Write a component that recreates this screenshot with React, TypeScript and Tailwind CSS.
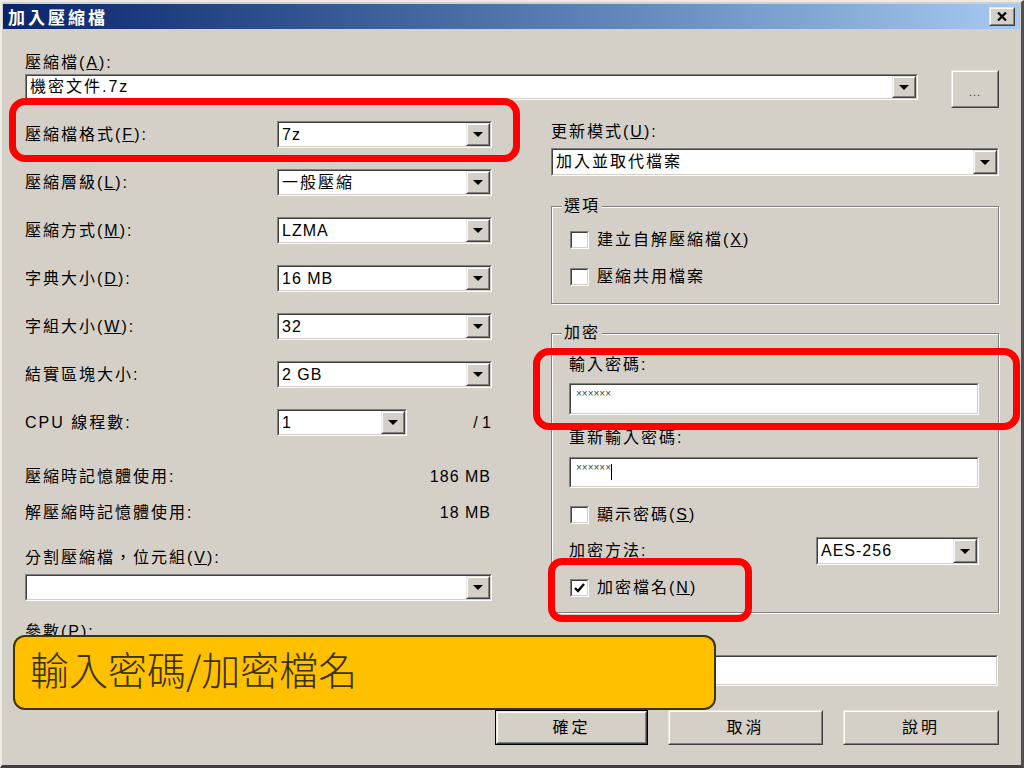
import React from 'react';

const UI = "font-['Liberation_Sans','Noto_Sans_CJK_TC',sans-serif] text-[16px] leading-[20px] tracking-[2px] text-black";

const Arrow = () => (
  <svg width="10" height="5" viewBox="0 0 10 5">
    <path d="M0 0h10L5 5z" fill="#000" />
  </svg>
);

const Raised = ({ className = '', children }: { className?: string; children?: React.ReactNode }) => (
  <div className={`border border-t-[#e8e6e0] border-l-[#e8e6e0] border-b-[#404040] border-r-[#404040] ${className}`}>
    <div className="w-full h-full flex items-center justify-center border border-t-white border-l-white border-b-[#808080] border-r-[#808080] bg-[#D4D0C8]">
      {children}
    </div>
  </div>
);

const Sunken = ({ className = '', inner = '', children }: { className?: string; inner?: string; children?: React.ReactNode }) => (
  <div className={`border border-t-[#808080] border-l-[#808080] border-b-white border-r-white ${className}`}>
    <div className={`w-full h-full flex bg-white border border-t-[#404040] border-l-[#404040] border-b-[#D4D0C8] border-r-[#D4D0C8] ${inner}`}>
      {children}
    </div>
  </div>
);

const Combo = ({ value, className = '', latin = false }: { value: string; className?: string; latin?: boolean }) => (
  <Sunken className={className} inner="items-stretch">
    <span className={`flex-1 flex items-center pl-[3px] whitespace-nowrap ${latin ? 'tracking-[1px]' : ''}`}>{value}</span>
    <Raised className="w-[24px]">
      <Arrow />
    </Raised>
  </Sunken>
);

const Check = ({ checked = false, children }: { checked?: boolean; children: React.ReactNode }) => (
  <div className="flex items-center h-[20px]">
    <Sunken className="w-[19px] h-[18px]" inner="items-center justify-center">
      {checked && (
        <svg width="11" height="10" viewBox="0 0 11 10">
          <path d="M1 5l3 3 6-7" stroke="#000" strokeWidth="2.4" fill="none" />
        </svg>
      )}
    </Sunken>
    <span className="ml-[8px]">{children}</span>
  </div>
);

const Group = ({ label, className = '', children }: { label: string; className?: string; children?: React.ReactNode }) => (
  <div className={`relative border border-[#808080] shadow-[inset_1px_1px_0_#fff,1px_1px_0_#fff] ${className}`}>
    <span className="absolute left-[10px] top-[-11px] bg-[#D4D0C8] px-[2px] leading-[20px]">{label}</span>
    {children}
  </div>
);

const Row = ({ label, children }: { label: React.ReactNode; children: React.ReactNode }) => (
  <div className="flex items-center h-[27px]">
    <span className="flex-1 whitespace-nowrap">{label}</span>
    {children}
  </div>
);

const Btn = ({ label, className = '', primary = false }: { label: string; className?: string; primary?: boolean }) => (
  <div className={`h-[35px] ${primary ? 'border border-black' : ''} ${className}`}>
    <Raised className="w-full h-full">
      <span className="tracking-[3px]">{label}</span>
    </Raised>
  </div>
);

export default function App() {
  return (
    <div className={`relative w-[1024px] h-[768px] overflow-hidden bg-[#D4D0C8] border-t-2 border-l-2 border-t-[#eceae4] border-l-[#eceae4] border-r-[3px] border-b-[3px] border-r-[#505050] border-b-[#404040] ${UI}`}>
      <div className="pt-[2px] px-px flex flex-col h-full">
        {/* title bar */}
        <div className="h-[25px] flex items-center justify-between pl-[5px] pr-[5px] bg-linear-to-r from-[#0A246A] to-[#A6CAF0]">
          <span className="text-white font-bold text-[17px] tracking-[3px] font-['Noto_Sans_CJK_TC',sans-serif]">加入壓縮檔</span>
          <Raised className="w-[26px] h-[19px]">
            <svg width="10" height="9" viewBox="0 0 10 9">
              <path d="M1 0.5l8 8M9 0.5l-8 8" stroke="#000" strokeWidth="2.2" />
            </svg>
          </Raised>
        </div>

        <div className="flex-1 flex flex-col pl-[22px] pr-[21px] pt-[24px]">
          <span className="h-[20px]">壓縮檔(<u>A</u>):</span>
          <div className="flex items-start mt-[-3px]">
            <Combo value="機密文件.7z" className="flex-1 h-[26px] mt-[4px]" />
            <Raised className="w-[48px] h-[38px] ml-[33px]">
              <span className="text-[11px] tracking-[1px] text-[#333] mt-[6px]">...</span>
            </Raised>
          </div>

          <div className="flex items-start gap-[59px]">
            {/* left column */}
            <div className="w-[467px] flex flex-col pt-[13px]">
              <div className="flex flex-col gap-[21px]">
                <Row label={<>壓縮檔格式(<u>F</u>):</>}>
                  <Combo value="7z" latin className="w-[215px] h-[27px]" />
                </Row>
                <Row label={<>壓縮層級(<u>L</u>):</>}>
                  <Combo value="一般壓縮" className="w-[215px] h-[27px]" />
                </Row>
                <Row label={<>壓縮方式(<u>M</u>):</>}>
                  <Combo value="LZMA" latin className="w-[215px] h-[27px]" />
                </Row>
                <Row label={<>字典大小(<u>D</u>):</>}>
                  <Combo value="16 MB" latin className="w-[215px] h-[27px]" />
                </Row>
                <Row label={<>字組大小(<u>W</u>):</>}>
                  <Combo value="32" latin className="w-[215px] h-[27px]" />
                </Row>
                <Row label="結實區塊大小:">
                  <Combo value="2 GB" latin className="w-[215px] h-[27px]" />
                </Row>
                <Row label="CPU 線程數:">
                  <Combo value="1" latin className="w-[130px] h-[27px]" />
                  <span className="w-[85px] text-right pr-[1px] tracking-[0px]">/ 1</span>
                </Row>
              </div>
              <div className="flex justify-between h-[20px] mt-[31px]">
                <span>壓縮時記憶體使用:</span>
                <span className="tracking-[1px] pr-[1px]">186 MB</span>
              </div>
              <div className="flex justify-between h-[20px] mt-[16px]">
                <span>解壓縮時記憶體使用:</span>
                <span className="tracking-[1px] pr-[1px]">18 MB</span>
              </div>
              <span className="h-[20px] mt-[25px]">分割壓縮檔，位元組(<u>V</u>):</span>
              <Combo value="" className="w-full h-[27px] mt-[6px]" />
            </div>

            {/* right column */}
            <div className="flex-1 flex flex-col pt-[14px]">
              <span className="h-[20px]">更新模式(<u>U</u>):</span>
              <Combo value="加入並取代檔案" className="w-full h-[28px] mt-[6px]" />

              <Group label="選項" className="h-[98px] mt-[30px] pt-[23px] pl-[18px] flex flex-col gap-[17px]">
                <Check>建立自解壓縮檔(<u>X</u>)</Check>
                <Check>壓縮共用檔案</Check>
              </Group>

              <Group label="加密" className="h-[280px] mt-[29px] pt-[21px] pl-[17px] pr-[19px] flex flex-col">
                <span className="h-[20px]">輸入密碼:</span>
                <Sunken className="h-[32px] mt-[8px]" inner="items-start pl-[5px] pt-[4px]">
                  <span className="text-[10px] leading-[10px] tracking-[0px] text-[#444]">××××××</span>
                </Sunken>
                <span className="h-[20px] mt-[13px]">重新輸入密碼:</span>
                <Sunken className="h-[31px] mt-[9px]" inner="items-start pl-[5px] pt-[4px]">
                  <span className="text-[10px] leading-[10px] tracking-[0px] text-[#444]">××××××</span>
                  <span className="w-px h-[16px] bg-black mt-[1px]" />
                </Sunken>
                <div className="mt-[17px] pl-px">
                  <Check>顯示密碼(<u>S</u>)</Check>
                </div>
                <div className="flex items-center h-[28px] mt-[12px]">
                  <span className="flex-1">加密方法:</span>
                  <Combo value="AES-256" latin className="w-[163px] h-[28px]" />
                </div>
                <div className="mt-[13px] pl-px">
                  <Check checked>加密檔名(<u>N</u>)</Check>
                </div>
              </Group>
            </div>
          </div>

          <span className="h-[20px] mt-[9px]">參數(<u>P</u>):</span>
          <Sunken className="h-[31px] mt-[13px] w-[973px]" />

          <div className="flex justify-end gap-[20px] mt-[24px]">
            <Btn label="確定" primary className="w-[153px]" />
            <Btn label="取消" className="w-[155px]" />
            <Btn label="說明" className="w-[156px]" />
          </div>
        </div>
      </div>

      {/* annotations */}
      <div className="absolute left-[7px] top-[96px] w-[511px] h-[64px] border-[7px] border-[#FF0000] rounded-[16px]" />
      <div className="absolute left-[531px] top-[346px] w-[487px] h-[82px] border-[7px] border-[#FF0000] rounded-[16px]" />
      <div className="absolute left-[546px] top-[556px] w-[204px] h-[64px] border-[7px] border-[#FF0000] rounded-[14px]" />
      <div className="absolute left-[11px] top-[633px] w-[703px] h-[75px] bg-[#FFC000] border-2 border-[#3d3408] rounded-[12px] pl-[15px] pt-[9px]">
        <span className="font-['Noto_Sans_CJK_TC',sans-serif] font-light text-[39px] leading-[44px] tracking-[0px] text-[#3a3000]">輸入密碼/加密檔名</span>
      </div>
    </div>
  );
}
